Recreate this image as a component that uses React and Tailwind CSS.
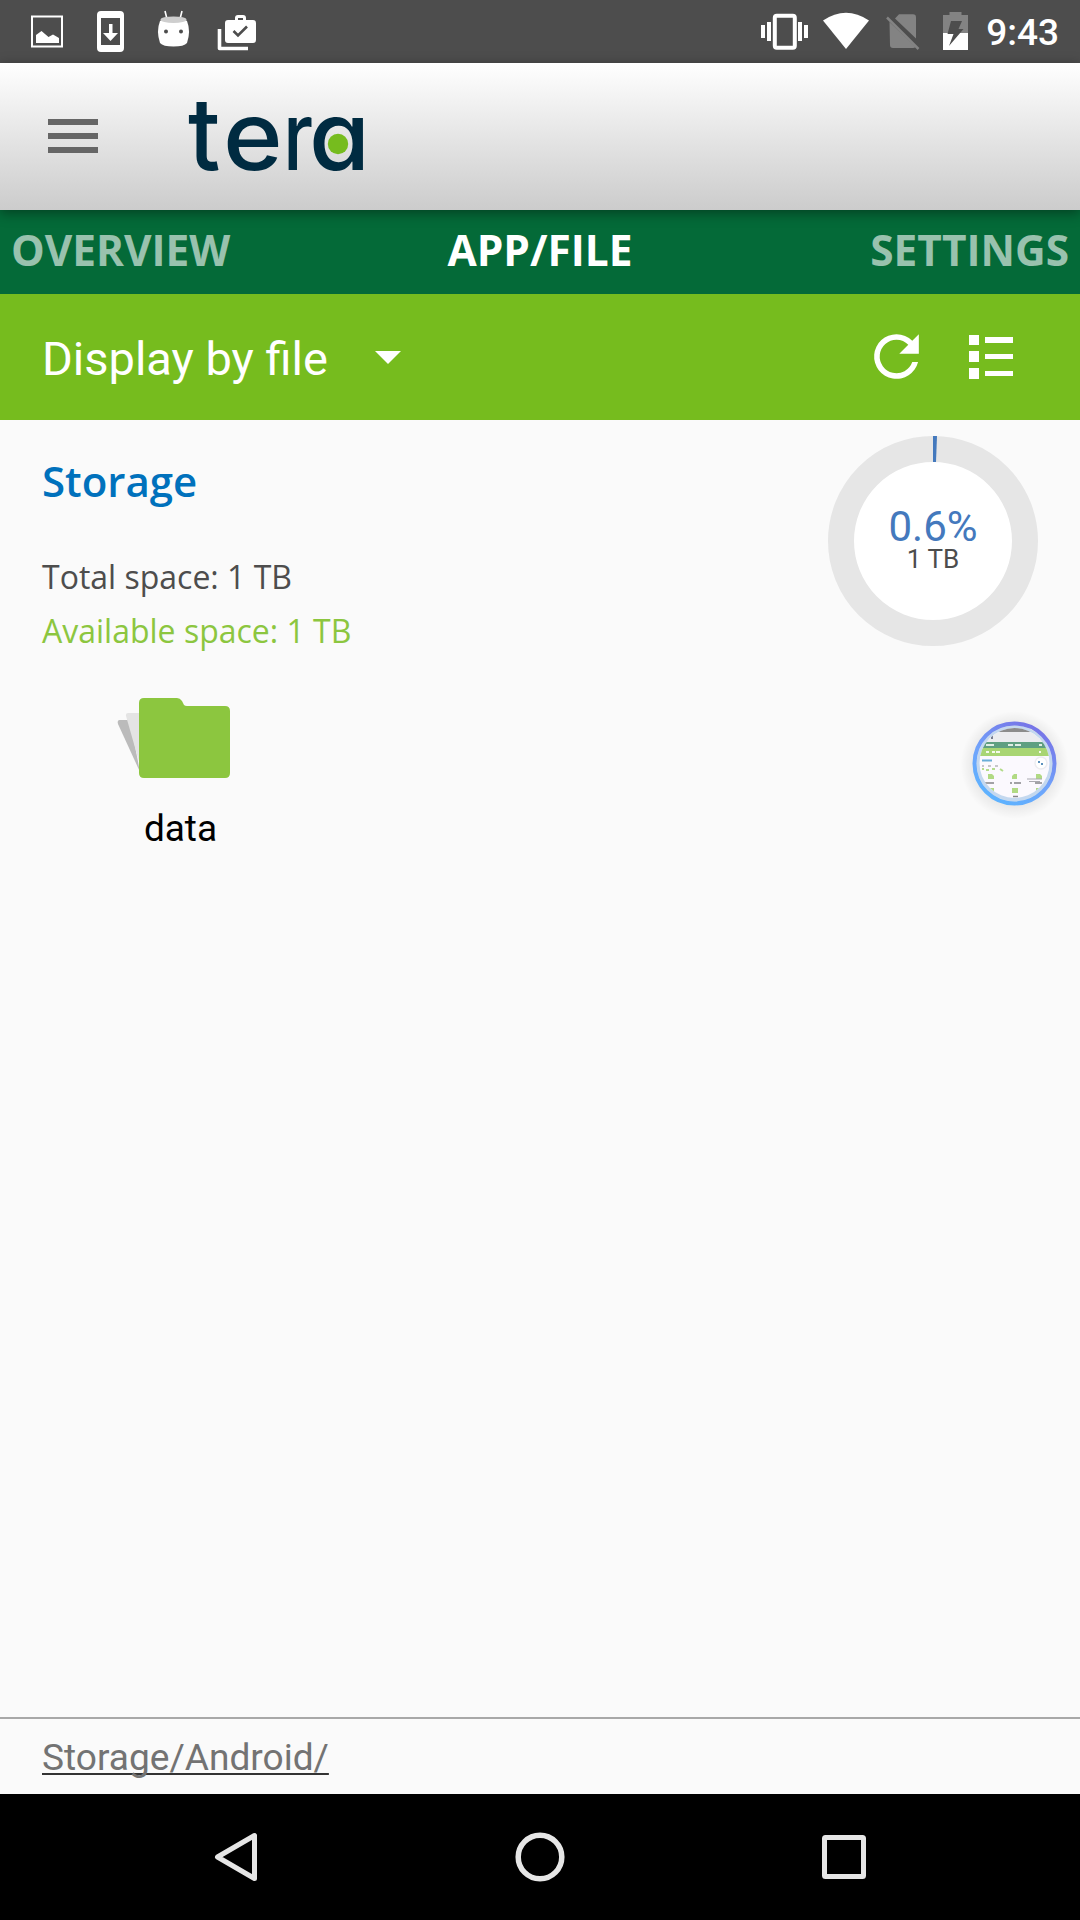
function StatusIcons() {
  return (
    <svg width="1080" height="63" viewBox="0 0 1080 63" className="block">
      <rect x="32" y="16.500" width="30" height="30" strokeWidth="2" fill="none" stroke="#fff" />
      <path d="M36 43V35L41.5 31L48.5 37L53 34.5L59 38V43Z" fill="#fff" />
      <path fillRule="evenodd" d="M101 11H120Q124 11 124 15V48Q124 52 120 52H101Q97 52 97 48V15Q97 11 101 11ZM101 18V45H120V18Z" fill="#fff" />
      <path d="M109 24H112.500V33H118L110.500 41L103 33H109Z" fill="#fff" />
      <path d="M165 11L167 19M182 11L180 19" stroke="#fff" strokeWidth="1.600" />
      <path d="M160 21Q173.500 13 187 21Q191 31 187 43Q184 46.500 173.500 46.500Q163 46.500 160 43Q156 31 160 21Z" fill="#fff" />
      <ellipse cx="173.500" cy="19.700" rx="13" ry="3.300" fill="#cecece" />
      <circle cx="166" cy="31.500" r="2" fill="#4d4d4d" />
      <circle cx="181" cy="31.500" r="2" fill="#4d4d4d" />
      <path d="M219.500 29V48.500H248" fill="none" stroke="#fff" strokeWidth="3.600" strokeLinejoin="round" />
      <path fillRule="evenodd" d="M228 20H235V18Q235 15 238 15H243Q246 15 246 18V20H253Q256 20 256 23V40Q256 43 253 43H228Q225 43 225 40V23Q225 20 228 20ZM238 18V20H243V18Z" fill="#fff" />
      <path d="M233.500 31L238 35.500L247 26.500" fill="none" stroke="#4d4d4d" strokeWidth="2.600" />
      <rect x="774.800" y="15.800" width="20" height="32" rx="2" fill="none" stroke="#fff" strokeWidth="4" />
      <path d="M761 25H765V38H761ZM767 22H771V41H767ZM798 22H802V41H798ZM804 25H808V38H804Z" fill="#fff" />
      <path d="M846 49L823 20.500Q846 5 869 20.500Z" fill="#fff" />
      <path d="M889.500 22L915.500 47Q914.500 48 913 48H893Q890 48 890 45ZM895 18.500L899 14.300H913Q916 14.300 916 17.500V38.500Z" fill="#838383" />
      <path d="M887 17.500L918.500 49" stroke="#838383" strokeWidth="2.500" />
      <path d="M943 33V15H949.500V12H961.500V15H968V33Z" fill="#838383" />
      <path d="M943 33H968V50H943Z" fill="#fff" />
      <path d="M951 21H962L958.500 29H963.500L949 46L953.500 34H947.500Z" fill="#4d4d4d" />
    </svg>
  );
}

function Logo() {
  return (
    <svg width="190" height="110" viewBox="182 83 190 110" className="ml-[84px] block overflow-visible">
      <g fill="#002b41" fontFamily="Inter" fontWeight="500" fontSize="95" style={{ fontFeatureSettings: "'cv11'" }}>
        <text transform="translate(188 171) scale(1 1.060)">t</text>
        <text transform="translate(223 171) scale(1.070 1)">e</text>
        <text transform="translate(283 171) scale(0.820 1)">r</text>
        <text transform="translate(309 171) scale(1.040 1)">a</text>
      </g>
      <circle cx="338" cy="145" r="10.200" fill="#76bc1e" />
    </svg>
  );
}

function UsageRing() {
  return (
    <div className="relative h-[210px] w-[210px]">
      <svg width="210" height="210" className="block">
        <circle cx="105" cy="105" r="92" fill="#fff" stroke="#e6e6e6" strokeWidth="26" />
        <path d="M105 0H109L108 26H105Z" fill="#4479bd" />
      </svg>
      <div className="absolute inset-0 flex flex-col items-center pt-[70px] font-['Roboto']">
        <span className="text-[42px] leading-[41px] text-[#4479bd]">0.6%</span>
        <span className="text-[26px] leading-[24px] text-[#4d4d4d]">1 TB</span>
      </div>
    </div>
  );
}

function FloatingBubble() {
  return (
    <svg width="130" height="130" viewBox="0 0 130 130" className="absolute left-[950px] top-[700px]">
      <defs>
        <linearGradient id="ring" x1="0.2" y1="1" x2="0.75" y2="0">
          <stop offset="0" stopColor="#5bb4ff" />
          <stop offset="0.45" stopColor="#70a4fb" />
          <stop offset="1" stopColor="#7772e6" />
        </linearGradient>
        <radialGradient id="halo">
          <stop offset="0.75" stopColor="#000" stopOpacity="0.07" />
          <stop offset="1" stopColor="#000" stopOpacity="0" />
        </radialGradient>
        <clipPath id="lens"><circle cx="64.500" cy="63" r="35" /></clipPath>
      </defs>
      <circle cx="64.500" cy="65" r="54" fill="url(#halo)" />
      <circle cx="64.500" cy="63.500" r="38" fill="#c4d8ef" />
      <g clipPath="url(#lens)">
        <rect x="28" y="27" width="74" height="74" fill="#fbf9fe" />
        <rect x="28" y="27" width="74" height="5" fill="#8c8c8c" />
        <rect x="28" y="32" width="74" height="10" fill="#ececef" />
        <rect x="41" y="35" width="2" height="4" fill="#777c90" />
        <rect x="28" y="42" width="74" height="6" fill="#5f9f81" />
        <path d="M36 45H44M58 45H63M65 45H71M89 45H92" stroke="#e0eee5" strokeWidth="1.800" />
        <rect x="28" y="48" width="74" height="8" fill="#a8d573" />
        <path d="M36 52H39M42 52H45M46 52H50M89 52H91" stroke="#f4faeb" strokeWidth="2" />
        <path d="M32 60.500H42" stroke="#69add8" strokeWidth="2" />
        <circle cx="91" cy="63" r="6" fill="#fff" stroke="#ececf0" strokeWidth="1.500" />
        <path d="M88 62H90M91 64H93" stroke="#5c91bd" strokeWidth="2" />
        <path d="M32 66H34M38 66H41M45 66H48" stroke="#b5b5b9" strokeWidth="1.500" />
        <path d="M32 69H34M36 70H39M42 69H45M50 69L53 71" stroke="#b4dc8c" strokeWidth="2" />
        <path d="M38 74H42L44 76V79H38ZM62 79V76L64 74H67V79ZM86 74H90L92 76V79H86ZM38 88H44V92H38ZM62 88H68V93H62ZM86 88H92V92H86Z" fill="#b1da84" />
        <path d="M35 83H44M60 83H62M64 83H71M85 83H92M63 96.500H68" stroke="#858589" strokeWidth="1.500" />
        <path d="M77 79H92M79 81.500H90" stroke="#aaaab0" strokeWidth="1.200" />
      </g>
      <circle cx="64.500" cy="63.500" r="40" fill="none" stroke="url(#ring)" strokeWidth="4" />
    </svg>
  );
}

export default function App() {
  return (
    <div className="relative flex h-[1920px] w-[1080px] flex-col overflow-hidden bg-[#fafafa]">
      <div className="relative h-[63px] bg-[#4d4d4d]">
        <StatusIcons />
        <span className="absolute right-[21px] top-[11px] font-['Roboto'] text-[37px] font-medium leading-[44px] text-white">9:43</span>
      </div>

      <header className="relative flex h-[147px] items-center bg-linear-to-b from-white to-[#cccccc] shadow-[0_3px_12px_rgba(0,0,0,0.4)]">
        <div className="mb-[2px] ml-12 flex w-[50px] flex-col gap-[8px]">
          <div className="h-[6px] bg-[#666]" />
          <div className="h-[6px] bg-[#666]" />
          <div className="h-[6px] bg-[#666]" />
        </div>
        <Logo />
      </header>

      <nav className="grid h-[84px] grid-cols-3 items-center bg-[#046a38] px-[11px] pb-[5px] font-['Open_Sans'] text-[42.4px] font-bold leading-[57px] text-white/60">
        <span>OVERVIEW</span>
        <span className="text-center text-white">APP/FILE</span>
        <span className="text-right">SETTINGS</span>
      </nav>

      <div className="flex h-[126px] items-center bg-[#76bc1e] pl-[42px] font-['Roboto'] text-[47px] text-white">
        <span className="mt-[4px] w-[285px] whitespace-nowrap leading-[56px]">Display by file</span>
        <svg width="26" height="14" className="ml-[48px] mt-[2px]"><path d="M0 0H26L13 13Z" fill="#fff" /></svg>
        <svg width="67" height="67" viewBox="0 0 24 24" className="mb-[2px] ml-auto mr-[38px]">
          <path fill="#fff" d="M17.65 6.350A7.958 7.958 0 0 0 12 4a8 8 0 1 0 7.730 10h-2.080A6 6 0 1 1 12 6c1.660 0 3.140.690 4.220 1.780L13 11h7V4z" />
        </svg>
        <svg width="46" height="46" className="mr-[66px]">
          <path fill="#fff" d="M1 1H11V11H1ZM1 17H11V28H1ZM1 34H11V45H1ZM17 3H45V9H17ZM17 20H45V25H17ZM17 37H45V42H17Z" />
        </svg>
      </div>

      <main className="flex grow flex-col">
        <section className="flex justify-between px-[42px] pt-[16px] font-['Open_Sans']">
          <div className="flex flex-col pt-[16px]">
            <h1 className="text-[42px] font-semibold leading-[57px] text-[#0071bc]">Storage</h1>
            <p className="mt-[41px] text-[32px] leading-[54px] text-[#4d4d4d]">Total space: 1 TB</p>
            <p className="text-[32px] leading-[54px] text-[#8cc63f]">Available space: 1 TB</p>
          </div>
          <UsageRing />
        </section>
        <div className="mt-[38px] flex w-[361px] flex-col items-center">
          <svg width="114" height="84" viewBox="117 696 114 84" className="mr-[13px] block">
            <path d="M119.500 720H130L140 772L118 724Q117 720 119.500 720Z" fill="#bbb" />
            <path d="M128 713H140V765L126 716Q125.500 713 128 713Z" fill="#e4e4e4" />
            <path d="M144 698H177Q180 698 182 701L184 705Q185 706 187 706H225Q230 706 230 711V773Q230 778 225 778H144Q139 778 139 773V703Q139 698 144 698Z" fill="#8cc63f" />
          </svg>
          <span className="mt-[27px] font-['Roboto'] text-[37px] leading-[44px] text-black">data</span>
        </div>
      </main>

      <footer className="flex h-[77px] items-center border-t-2 border-[#a8a8a8] pl-[42px] font-['Roboto'] text-[37.1px] text-[#737373]">
        <span className="mt-[3px] leading-[44px] underline decoration-[#333] decoration-2 underline-offset-[3px] [text-decoration-skip-ink:none]">Storage/Android/</span>
      </footer>

      <div className="h-[126px] bg-black">
        <svg width="1080" height="126" fill="none" stroke="#e6e6e6" strokeWidth="5">
          <path d="M254.500 41.500V84.500L217.500 63Z" strokeLinejoin="round" />
          <circle cx="540" cy="63" r="21.800" strokeWidth="5.500" />
          <rect x="824.500" y="43.500" width="39" height="39" rx="1" />
        </svg>
      </div>
      <FloatingBubble />
    </div>
  );
}
